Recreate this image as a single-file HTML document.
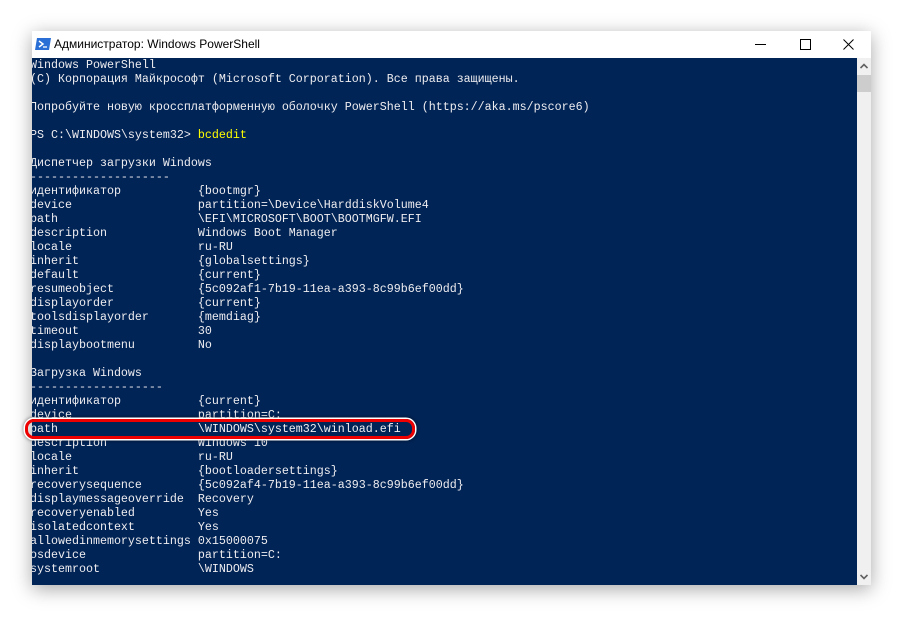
<!DOCTYPE html><html><head><meta charset="utf-8"><style>
body{margin:0;width:903px;height:618px;background:#fff;position:relative;overflow:hidden}
.win{position:absolute;left:32px;top:31px;width:839px;height:554px;background:#fff;box-shadow:0 4px 18px rgba(0,0,0,.35)}
.title{position:absolute;left:0;top:0;width:839px;height:27px;font:12px "Liberation Sans",sans-serif;color:#000}
.con{position:absolute;left:0;top:27px;width:825px;height:527px;background:#012456;overflow:hidden}
pre{margin:0;position:absolute;left:-2px;top:0;font:11.67px/14px "Liberation Mono",monospace;color:#eeedf0}
.sb{position:absolute;left:825px;top:27px;width:14px;height:527px;background:#f0f0f0}
.red{position:absolute;left:25px;top:419px;width:384px;height:14px;border:3px solid #e00;border-radius:9px;box-shadow:0 0 0 1.5px #fff,0 0 3px 2px rgba(0,0,0,.4)}
</style></head><body>
<div class="win">
<div class="title">
<svg style="position:absolute;left:3px;top:6px" width="16" height="14"><polygon points="2,1 16,1 14,13 0,13" fill="#2a6fd6"/><path d="M4,4 L8,7 L4,10" stroke="#fff" stroke-width="1.5" fill="none"/><path d="M8,10 H12" stroke="#fff" stroke-width="1.3"/></svg>
<span style="position:absolute;left:22px;top:6px">Администратор: Windows PowerShell</span>
<svg style="position:absolute;left:720px;top:6px" width="115" height="16"><path d="M3,7.5 H14" stroke="#000"/><rect x="48.5" y="2.5" width="10" height="10" fill="none" stroke="#000"/><path d="M91.5,2.5 L101.5,12.5 M101.5,2.5 L91.5,12.5" stroke="#000"/></svg>
</div>
<div class="con"><pre>Windows PowerShell
(C) Корпорация Майкрософт (Microsoft Corporation). Все права защищены.

Попробуйте новую кроссплатформенную оболочку PowerShell (https://aka.ms/pscore6)

PS C:\WINDOWS\system32&gt; <span style="color:#ffff00">bcdedit</span>

Диспетчер загрузки Windows
--------------------
идентификатор           {bootmgr}
device                  partition=\Device\HarddiskVolume4
path                    \EFI\MICROSOFT\BOOT\BOOTMGFW.EFI
description             Windows Boot Manager
locale                  ru-RU
inherit                 {globalsettings}
default                 {current}
resumeobject            {5c092af1-7b19-11ea-a393-8c99b6ef00dd}
displayorder            {current}
toolsdisplayorder       {memdiag}
timeout                 30
displaybootmenu         No

Загрузка Windows
-------------------
идентификатор           {current}
device                  partition=C:
path                    \WINDOWS\system32\winload.efi
description             Windows 10
locale                  ru-RU
inherit                 {bootloadersettings}
recoverysequence        {5c092af4-7b19-11ea-a393-8c99b6ef00dd}
displaymessageoverride  Recovery
recoveryenabled         Yes
isolatedcontext         Yes
allowedinmemorysettings 0x15000075
osdevice                partition=C:
systemroot              \WINDOWS</pre></div>
<div class="sb"><div style="position:absolute;left:0;top:17px;width:14px;height:17px;background:#cdcdcd"></div>
<svg style="position:absolute;left:3px;top:5px" width="8" height="6"><path d="M0.5,5 L4,1.5 L7.5,5" stroke="#606060" stroke-width="1.6" fill="none"/></svg>
<svg style="position:absolute;left:3px;top:516px" width="8" height="6"><path d="M0.5,1 L4,4.5 L7.5,1" stroke="#606060" stroke-width="1.6" fill="none"/></svg></div>
</div>
<div class="red"></div>
</body></html>
